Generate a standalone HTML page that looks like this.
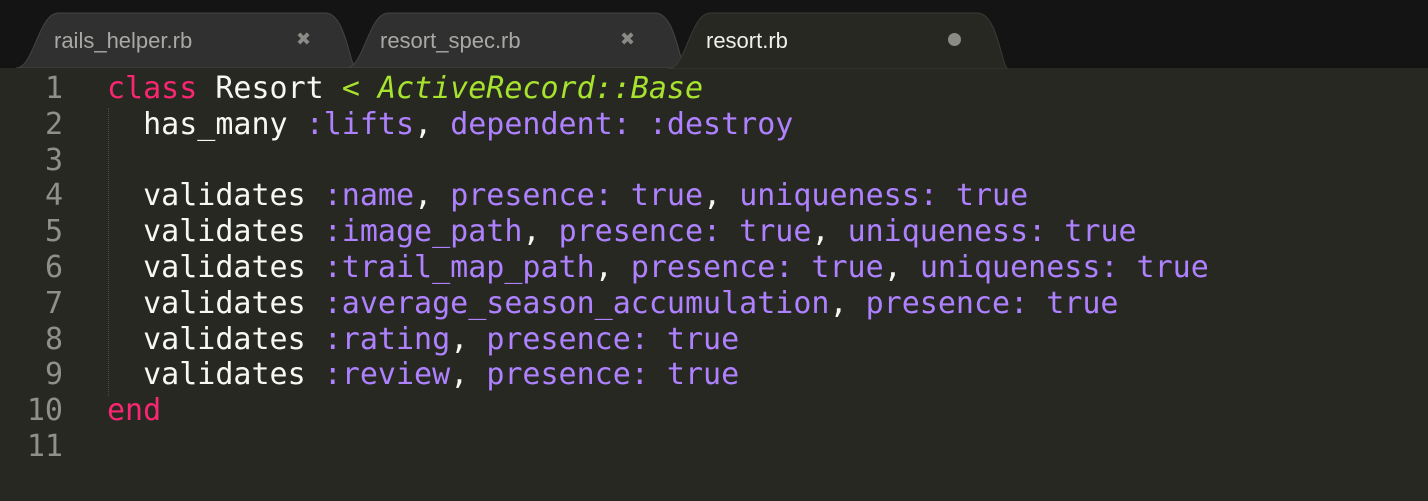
<!DOCTYPE html>
<html><head><meta charset="utf-8"><style>
html,body{margin:0;padding:0;}
body{width:1428px;height:470px;background:#272822;overflow:hidden;position:relative;font-family:"DejaVu Sans Mono","Liberation Mono",monospace;}
#bar{position:absolute;left:0;top:0;width:1428px;height:68px;background:#141414;}
.tab{position:absolute;top:12px;height:56px;}
.tab svg{position:absolute;left:0;top:0;}
.tab .t{position:absolute;top:16px;font-family:"Liberation Sans",sans-serif;font-size:22px;color:#a8a8a4;}
.tab .x{position:absolute;top:17px;font-size:18px;color:#8a8a86;font-family:"Liberation Sans",sans-serif;}
#code{position:absolute;left:0;top:71px;font-size:30px;line-height:35.8px;white-space:pre;color:#f8f8f2;}
.ln{position:absolute;left:0;width:63px;text-align:right;color:#8f908a;}
.src{position:absolute;left:107px;}
.k{color:#f92672}.p{color:#ae81ff}.g{color:#a6e22e;font-style:italic}
.guide{position:absolute;left:108px;top:108px;height:288px;border-left:1px dotted #4a4a44;}
</style></head><body>
<div id="bar"></div>
<div class="tab" style="left:16px;width:340px"><svg width="340" height="56"><path d="M0 56 C18 56 22 2 42 1 L310 1 C330 2 334 56 340 56 Z" fill="#303030" stroke="#444" stroke-width="1"/></svg><span class="t" style="left:38px">rails_helper.rb</span><span class="x" style="left:280px">✖</span></div>
<div class="tab" style="left:346px;width:340px"><svg width="340" height="56"><path d="M0 56 C18 56 22 2 42 1 L310 1 C330 2 334 56 340 56 Z" fill="#303030" stroke="#444" stroke-width="1"/></svg><span class="t" style="left:34px">resort_spec.rb</span><span class="x" style="left:274px">✖</span></div>
<div class="tab" style="left:668px;width:340px"><svg width="340" height="57"><path d="M0 57 C18 57 22 2 42 1 L310 1 C330 2 334 57 340 57 Z" fill="#272822" stroke="#3a3a36" stroke-width="1"/></svg><span class="t" style="left:38px;color:#f0f0ea">resort.rb</span><span style="position:absolute;left:280px;top:21px;width:13px;height:13px;border-radius:50%;background:#8a8a86"></span></div>
<div class="guide"></div>
<div id="code">
<div class="ln" style="top:0">1</div><div class="src" style="top:0"><span class="k">class</span> Resort <span class="g">&lt; ActiveRecord::Base</span></div>
<div class="ln" style="top:35.8px">2</div><div class="src" style="top:35.8px">  has_many <span class="p">:lifts</span>, <span class="p">dependent:</span> <span class="p">:destroy</span></div>
<div class="ln" style="top:71.6px">3</div>
<div class="ln" style="top:107.4px">4</div><div class="src" style="top:107.4px">  validates <span class="p">:name</span>, <span class="p">presence: true</span>, <span class="p">uniqueness: true</span></div>
<div class="ln" style="top:143.2px">5</div><div class="src" style="top:143.2px">  validates <span class="p">:image_path</span>, <span class="p">presence: true</span>, <span class="p">uniqueness: true</span></div>
<div class="ln" style="top:179px">6</div><div class="src" style="top:179px">  validates <span class="p">:trail_map_path</span>, <span class="p">presence: true</span>, <span class="p">uniqueness: true</span></div>
<div class="ln" style="top:214.8px">7</div><div class="src" style="top:214.8px">  validates <span class="p">:average_season_accumulation</span>, <span class="p">presence: true</span></div>
<div class="ln" style="top:250.6px">8</div><div class="src" style="top:250.6px">  validates <span class="p">:rating</span>, <span class="p">presence: true</span></div>
<div class="ln" style="top:286.4px">9</div><div class="src" style="top:286.4px">  validates <span class="p">:review</span>, <span class="p">presence: true</span></div>
<div class="ln" style="top:322.2px">10</div><div class="src" style="top:322.2px"><span class="k">end</span></div>
<div class="ln" style="top:358px">11</div>
</div>
</body></html>
